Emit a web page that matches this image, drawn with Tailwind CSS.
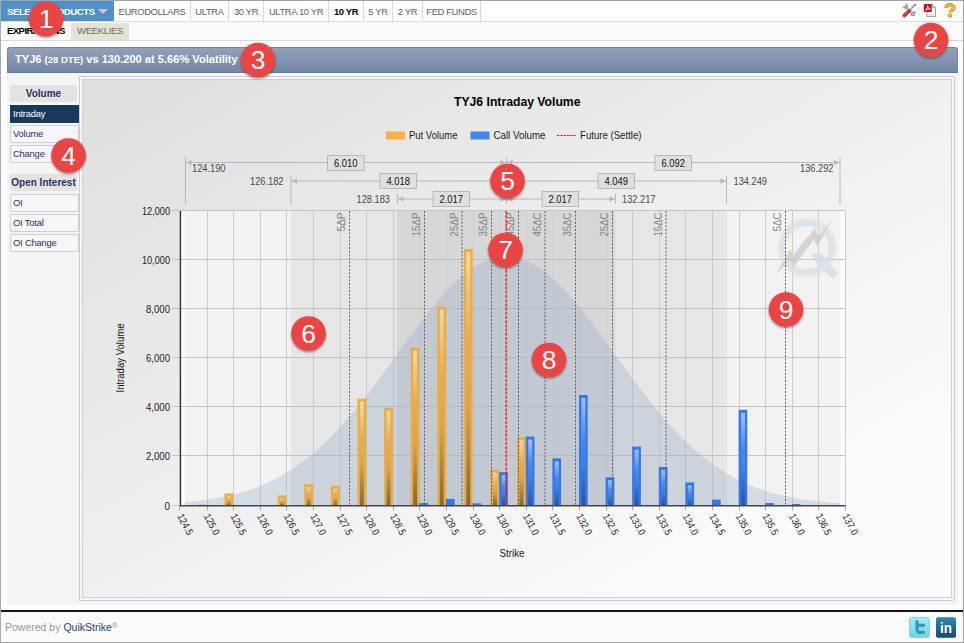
<!DOCTYPE html>
<html lang="en">
<head>
<meta charset="utf-8">
<title>QuikStrike - Intraday Volume</title>
<script src="https://cdn.jsdelivr.net/npm/@tailwindcss/browser@4"></script>
</head>
<body class="w-[964px] h-[643px] overflow-hidden bg-white font-['Liberation_Sans',Arial,sans-serif]">
<div class="relative flex flex-col w-[964px] h-[643px] border border-[#a3a3a3] border-l-[#aaa]">

  <nav class="flex h-[21px] shrink-0 border-b border-[#dcdcdc] text-[9.4px] leading-[19px] text-[#606060] tracking-[-0.35px] whitespace-nowrap">
    <div class="flex items-center w-[113px] h-[20px] bg-[#4f90c6] pl-[6px] text-white font-bold text-[9.6px] tracking-[-0.45px]">
      <span class="w-[89px] whitespace-nowrap">SELECT PRODUCTS</span>
      <span class="ml-[2px] border-x-[5px] border-x-transparent border-t-[5px] border-t-[#c9c9c9]"></span>
    </div>
    <div class="flex items-center justify-center w-[77px] border-r border-[#d8d8d8]">EURODOLLARS</div>
    <div class="flex items-center justify-center w-[38px] border-r border-[#d8d8d8]">ULTRA</div>
    <div class="flex items-center justify-center w-[35px] border-r border-[#d8d8d8]">30 YR</div>
    <div class="flex items-center justify-center w-[65px] border-r border-[#d8d8d8]">ULTRA 10 YR</div>
    <div class="flex items-center justify-center w-[35px] border-r border-[#d8d8d8] font-bold text-black">10 YR</div>
    <div class="flex items-center justify-center w-[29px] border-r border-[#d8d8d8]">5 YR</div>
    <div class="flex items-center justify-center w-[30px] border-r border-[#d8d8d8]">2 YR</div>
    <div class="flex items-center justify-center w-[58px] border-r border-[#d8d8d8]">FED FUNDS</div>
    <div class="ml-auto flex items-center gap-[6px] pr-[6px] pb-px">
      <svg width="15" height="15" viewBox="0 0 15 15" fill="none">
        <path d="M3.5 3.5 12 12" stroke="#8d8d8d" stroke-width="2.4" stroke-linecap="round"/>
        <path d="M1.2 3.8A2.5 2.5 0 0 0 4.8 4.6 2.5 2.5 0 0 0 3.7 1" stroke="#8d8d8d" stroke-width="1.3"/>
        <path d="M10.4 13.2a2.2 2.2 0 0 1 3.2-3.2" stroke="#8d8d8d" stroke-width="1.3"/>
        <path d="M3.7 3.7 12 12" stroke="#e9e9e9" stroke-width=".9"/>
        <path d="M7.6 7.2 13.2 1.6" stroke="#999" stroke-width="1.6"/><path d="m11.8 2 1.6-1 .5.6-1 1.5" stroke="#888"/>
        <path d="M2.4 12.6 7 8" stroke="#c32a22" stroke-width="3.5" stroke-linecap="round"/>
        <path d="M2.4 12 6.4 8" stroke="#ef6a5c" stroke-width="1"/>
      </svg>
      <svg width="14" height="15" viewBox="0 0 14 15">
        <path d="M4 1.5h5.7l2.8 2.8v9.2H4z" fill="#fafcfc" stroke="#8aa3a6"/>
        <path d="M9.5 1.5v3h3" fill="#d3e2e2" stroke="#8aa3a6" stroke-width=".8"/>
        <path d="M5.5 11h5.5M5.5 12.5h5.5" stroke="#c5d5d7" stroke-width=".7"/>
        <rect x=".8" y="1" width="8" height="8" rx=".7" fill="#c90d12"/>
        <path d="M2.4 7.2C4.4 5.8 4.9 4 4.6 2.7c.1 2 1.2 3.1 2.8 3.3-1.9-.2-3.3.2-5 1.2z" fill="none" stroke="#fff" stroke-width=".9"/>
      </svg>
      <svg width="14" height="15" viewBox="0 0 14 15" fill="none">
        <path d="M3.2 4.9C3.2 1.2 10.9 1 10.9 4.6c0 2.3-3.6 2.3-3.6 5" stroke="#b77a12" stroke-width="3.4"/>
        <path d="M3.4 4.6C3.6 1.5 10.6 1.5 10.6 4.6c0 2.1-3.4 2.2-3.4 4.8" stroke="#fbc53c" stroke-width="2"/>
        <circle cx="7.2" cy="12.6" r="1.7" fill="#f5b62b" stroke="#b77a12" stroke-width=".8"/>
      </svg>
    </div>
  </nav>

  <div class="flex h-[19px] shrink-0 bg-[#fafafa] border-b border-[#d9d9d9] border-t border-t-white text-[9.6px] leading-[16px]">
    <div class="w-[70px] pl-[6px] font-bold text-black whitespace-nowrap tracking-[-0.6px]">EXPIRATIONS</div>
    <div class="w-[58px] text-center bg-[#e3e4d4] text-[#6c6c66] tracking-[-0.4px]">WEEKLIES</div>
  </div>

  <main class="flex flex-col mt-[6px] ml-[6px] mr-[5px] h-[558px] shrink-0 bg-[#f4f4f5]">
    <div class="h-[26px] shrink-0 rounded-t-[3px] border border-[#7385a2] border-b-[#66799a] bg-linear-to-b from-[#92a1ba] to-[#7287a5] pl-[7px] leading-[23px] font-bold text-white text-[11.1px] whitespace-nowrap">TYJ6 <span class="text-[9.5px]">(28 DTE)</span> vs 130.200 at 5.66% Volatility</div>
    <div class="flex flex-1 min-h-0">
      <aside class="w-[72px] pt-[12px] pl-[3px] text-[9.4px] tracking-[-0.2px] text-[#27345a] shrink-0">
        <div class="h-[17px] w-[67px] rounded-[2px] bg-[#e3e3e4] text-center leading-[17px] font-bold text-[10px] tracking-[0px]">Volume</div>
        <div class="mt-[3px] h-[18px] bg-[#173a5c] pl-[3px] leading-[18px] text-white">Intraday</div>
        <div class="mt-[2px] h-[18px] rounded-l-[2px] border border-[#cfcfd8] bg-[#f6f6f8] pl-[2px] leading-[16px]">Volume</div>
        <div class="mt-[2px] h-[18px] rounded-l-[2px] border border-[#cfcfd8] bg-[#f6f6f8] pl-[2px] leading-[16px]">Change</div>
        <div class="mt-[11px] h-[17px] w-[67px] rounded-[2px] bg-[#e3e3e4] text-center leading-[17px] font-bold text-[10px] tracking-[0px] whitespace-nowrap">Open Interest</div>
        <div class="mt-[3px] h-[18px] rounded-l-[2px] border border-[#cfcfd8] bg-[#f6f6f8] pl-[2px] leading-[16px]">OI</div>
        <div class="mt-[2px] h-[18px] rounded-l-[2px] border border-[#cfcfd8] bg-[#f6f6f8] pl-[2px] leading-[16px]">OI Total</div>
        <div class="mt-[2px] h-[18px] rounded-l-[2px] border border-[#cfcfd8] bg-[#f6f6f8] pl-[2px] leading-[16px]">OI Change</div>
      </aside>
      <section class="mt-[3px] w-[876px] h-[525px] border border-[#cbccd5] rounded-r-[3px] bg-[#f6f6f7] p-[2px]">
        <div class="w-full h-full border border-[#cfcfcf] bg-linear-[150deg] from-[#dedede] to-[#fcfcfc] to-85%">
          <svg id="chart" class="block" width="868" height="517" viewBox="83 80 868 517" font-family="'Liberation Sans',Arial,sans-serif">
            <defs>
              <linearGradient id="put" x1="0" y1="0" x2="0" y2="1"><stop offset="0" stop-color="#ffe0a2"/><stop offset=".35" stop-color="#f2ae44"/><stop offset=".6" stop-color="#e6a43a"/><stop offset="1" stop-color="#80622c"/></linearGradient>
              <linearGradient id="call" x1="0" y1="0" x2="0" y2="1"><stop offset="0" stop-color="#a3bdf0"/><stop offset=".4" stop-color="#4a86ea"/><stop offset=".6" stop-color="#4280e8"/><stop offset="1" stop-color="#2e549c"/></linearGradient>
            </defs>
          </svg>
        </div>
      </section>
    </div>
  </main>

  <footer class="mt-[5px] flex flex-1 items-center border-t-2 border-[#15151a] bg-[#fafafa] pl-[4px] pr-[7px]">
    <div class="text-[10.5px] text-[#999] whitespace-nowrap mt-[2px]">Powered by <span class="text-[#27456f]">QuikStrike</span><span class="relative top-[-3px] text-[8px]">®</span></div>
    <div class="ml-auto flex gap-[6px] mt-px">
      <svg width="21" height="21" viewBox="0 0 21 21"><defs><linearGradient id="tw" x2="0" y2="1"><stop stop-color="#a8e9f2"/><stop offset="1" stop-color="#74d2e6"/></linearGradient></defs>
        <rect x=".5" y=".5" width="20" height="20" rx="2" fill="url(#tw)" stroke="#8cd3df"/>
        <path d="M8 4.5V12.2Q8 15.3 11 15.3H14.5M8 8.3H14.5" fill="none" stroke="#2c9ab9" stroke-width="3.2" stroke-linecap="round" stroke-linejoin="round"/></svg>
      <svg width="20" height="21" viewBox="0 0 20 21"><defs><linearGradient id="li" x2="0" y2="1"><stop stop-color="#3189ad"/><stop offset="1" stop-color="#0b4a74"/></linearGradient></defs>
        <rect x="0" y=".3" width="20" height="20.4" rx="2" fill="url(#li)"/>
        <text x="10" y="15.5" text-anchor="middle" textLength="12" lengthAdjust="spacingAndGlyphs" font-size="14" font-weight="bold" fill="#fff">in</text></svg>
    </div>
  </footer>

  <svg id="pins" class="absolute -left-px -top-px pointer-events-none" width="964" height="643" viewBox="0 0 964 643" font-family="'Liberation Sans',Arial,sans-serif" font-size="26.5" fill="#fff" text-anchor="middle">
    <defs><filter id="sh" x="-30%" y="-30%" width="160%" height="160%"><feDropShadow dx="0" dy="1.2" stdDeviation="1" flood-color="#000" flood-opacity=".5"/></filter></defs>
  </svg>
</div>

<script>
const NS = 'http://www.w3.org/2000/svg';
const chart = document.getElementById('chart');
function add(parent, tag, attrs, text) {
  const e = document.createElementNS(NS, tag);
  for (const k in attrs) e.setAttribute(k, attrs[k]);
  if (text !== undefined) e.textContent = text;
  parent.appendChild(e);
  return e;
}
const rect = (x, y, w, h, fill, o = {}) => add(chart, 'rect', {x, y, width: w, height: h, fill, ...o});
const line = (x1, y1, x2, y2, stroke, o = {}) => add(chart, 'line', {x1, y1, x2, y2, stroke, ...o});
const text = (s, x, y, w, o = {}) => add(chart, 'text', {x, y, 'font-size': 10.5, fill: '#222', textLength: w, lengthAdjust: 'spacingAndGlyphs', ...o}, s);

const L = 180.5, R = 845.5, T = 211, B = 505.5;
const px = k => L + (k - 124.5) * 53.2;
const h = v => v * (B - T) / 12000;

// title and legend
text('TYJ6 Intraday Volume', 454, 106, 126.5, {'font-size': 12, 'font-weight': 'bold', fill: '#000'});
rect(386, 131.5, 19, 8, '#fbb040'); text('Put Volume', 409, 139, 48.5);
rect(470.5, 131.5, 19, 8, '#4485f0'); text('Call Volume', 493.5, 139, 52);
line(557, 135.5, 576, 135.5, '#f01c1c', {'stroke-width': 1.2, 'stroke-dasharray': '2.4 .9'}); text('Future (Settle)', 580, 139, 61.5);

// plot background with standard deviation bands
rect(L, T, R - L, B - T, '#fdfdfd');
rect(185, T, 655, B - T, '#f2f2f2');
rect(291, T, 436, B - T, '#e6e6e6');
rect(397, T, 218, B - T, '#d7d7d7');
for (let i = 0; i <= 25; i++) {
  const x = Math.round(L + i * 26.6 - .5) + (i ? 0.5 : -0.5);
  line(x, T, x, B, '#c0c0c0', {'stroke-opacity': (x > 400 && x < 612) ? .35 : .75});
  line(x, B, x, B + 5, '#aaa');
}
for (let v = 0; v <= 12000; v += 2000) {
  const y = Math.round(B - h(v)) - .5;
  line(172, y, R, y, '#bdbdbd', {'stroke-opacity': .85});
  const s = v.toLocaleString('en-US');
  text(s, 170, y + 4, v >= 10000 ? 28 : v ? 24 : 5.5, {'text-anchor': 'end'});
}

// watermark
const wm = add(chart, 'g', {opacity: .75});
add(wm, 'circle', {cx: 807, cy: 247.5, r: 24.5, fill: 'none', stroke: '#d8dfe5', 'stroke-width': 6});
add(wm, 'circle', {cx: 807, cy: 247.5, r: 28.7, fill: 'none', stroke: '#dcdcdc', 'stroke-width': 1.2});
add(wm, 'path', {d: 'M811 254l10-1 17 20-5 6-14-12z', fill: '#d2dce4'});
add(wm, 'path', {d: 'M832 220L817.5 247 813.5 240 794 267 790 261 776 274 790 249 793 255 815 228 818 236Z', fill: '#cbcbcb', stroke: '#e6e6e6', 'stroke-width': .6});

// bars
function bar(x, v, border, grad) {
  const hh = Math.max(h(v), 1);
  rect(x, B - hh, 8.7, hh, border);
  if (hh > 8) rect(x + 2.4, B - hh + 3, 4, hh - 3.5, grad);
}
const puts = {125:25,125.5:490,126.5:410,127:870,127.5:800,128:4350,128.5:3980,129:6430,129.5:8100,130:10450,130.5:1460,131:2780,131.5:40,132:40};
const calls = {129:100,129.5:270,130:90,130.5:1360,131:2810,131.5:1920,132:4500,132.5:1150,133:2400,133.5:1570,134:940,134.5:240,135:3900,135.5:100,136:60};

// probability curve: full fill below the bars, a light tint above the puts
let d = 'M185 ' + B;
for (let x = 185; x <= 840; x += 2.5) d += 'L' + x + ' ' + (B - 249 * Math.exp(-((x - 506) ** 2) / (2 * 109 ** 2))).toFixed(2);
d += 'L840 ' + B + 'Z';
add(chart, 'path', {d, fill: '#9fb5cc', 'fill-opacity': .23});
for (const k in puts) bar(px(+k) - 9.2, puts[k], '#faad30', 'url(#put)');
add(chart, 'path', {d, fill: '#8fa8c2', 'fill-opacity': .12});
for (const k in calls) bar(px(+k) - .5, calls[k], '#3579e6', 'url(#call)');

// delta lines
[['5ΔP',349.5],['15ΔP',424.5],['25ΔP',462],['35ΔP',491.5],['45ΔP',518.5],['45ΔC',545],['35ΔC',575.5],['25ΔC',612.5],['15ΔC',666],['5ΔC',785.5]].forEach(([s, x]) => {
  line(x, T, x, B, '#606060', {'stroke-dasharray': '2 1.6'});
  const w = s.length > 3 ? 24 : 19;
  text(s, 0, 0, w, {transform: `translate(${x - 4.5} ${212.5 + w}) rotate(-90)`, fill: '#858585', 'font-size': 11});
});
line(506.2, T, 506.2, B, '#f01820', {'stroke-width': 1.4, 'stroke-dasharray': '3 1.2'});

// axes
line(L, T, L, B + 1, '#333', {'stroke-width': 1.3});
line(L, B + .2, R, B + .2, '#444', {'stroke-width': 1.6});
for (let i = 0; i <= 25; i++)
  text((124.5 + i / 2).toFixed(1), 0, 0, 22.5, {transform: `translate(${L + i * 26.6 - 3.5} 516) rotate(62)`, 'font-size': 10});
text('Strike', 499.5, 557, 25, {fill: '#111'});
text('Intraday Volume', 0, 0, 69, {transform: 'translate(124 392.5) rotate(-90)', fill: '#111'});

// range arrows
const G = '#b8b8b8';
[[162.5, 185.5, 840, 157], [181, 291, 726.5, 176], [199, 397.5, 615.5, 194]].forEach(([y, a, b, t]) => {
  line(a, y, b, y, G);
  line(a, t, a, 204, G); line(b, t, b, 204, G);
  line(506.5, y - 5, 506.5, y + 5, G);
  [[a + 1, 1], [b - 1, -1], [505.5, -1], [507.5, 1]].forEach(([x, s]) =>
    add(chart, 'path', {d: `M${x} ${y}l${5 * s} -2.7v5.4z`, fill: G}));
});
[['6.010',327,155],['4.018',379.5,173],['2.017',432.5,191],['6.092',654.5,155],['4.049',597.5,173],['2.017',541.5,191]].forEach(([s, x, y]) => {
  rect(x + .5, y + .5, 36.5, 15, '#e0e0e0', {stroke: '#b9b9b9'});
  text(s, x + 7, y + 12, 23.5, {fill: '#111'});
});
[['124.190',192,172],['126.182',250,185],['128.183',356.5,203],['132.217',622,203],['134.249',733.5,185],['136.292',800,172]].forEach(([s, x, y]) =>
  text(s, x, y, 33.5, {fill: '#4a4a4a', 'font-size': 10}));

// numbered callouts
const pins = document.getElementById('pins');
[[46,19],[931,40],[258,60],[68.5,155.5],[507.5,181],[308.5,333.5],[505.5,250],[549,360],[786,309.5]].forEach(([x, y], i) => {
  add(pins, 'circle', {cx: x, cy: y, r: 17.3, fill: '#e94545', filter: 'url(#sh)'});
  add(pins, 'text', {x, y: y + 9.3}, i + 1);
});
</script>
</body>
</html>
